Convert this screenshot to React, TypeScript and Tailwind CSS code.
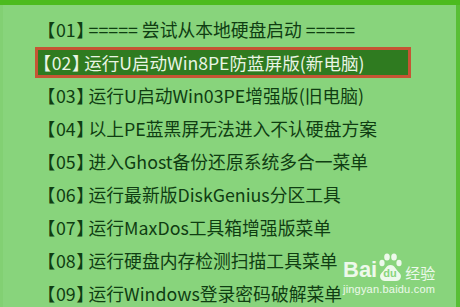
import React from "react";

type Item = {
  id: string;
  label: string;
};

const items: Item[] = [
  { id: "01", label: "===== 尝试从本地硬盘启动 =====" },
  { id: "02", label: "运行U启动Win8PE防蓝屏版(新电脑)" },
  { id: "03", label: "运行U启动Win03PE增强版(旧电脑)" },
  { id: "04", label: "以上PE蓝黑屏无法进入不认硬盘方案" },
  { id: "05", label: "进入Ghost备份还原系统多合一菜单" },
  { id: "06", label: "运行最新版DiskGenius分区工具" },
  { id: "07", label: "运行MaxDos工具箱增强版菜单" },
  { id: "08", label: "运行硬盘内存检测扫描工具菜单" },
  { id: "09", label: "运行Windows登录密码破解菜单" },
];

const selected = "02";

// brackets use proportional widths (palt) like the boot menu font
function Label({ item }: { item: Item }) {
  return (
    <>
      <span className="[font-feature-settings:'palt']">【</span>
      <span className="px-[1px]">{item.id}</span>
      <span className="[font-feature-settings:'palt'] pr-[3px]">】</span>
      <span>{item.label}</span>
    </>
  );
}

function BaiduMark() {
  return (
    <div className="absolute left-[343px] top-[252px] flex flex-col text-white/85 font-['Liberation_Sans',sans-serif]">
      <div className="flex items-end h-[30px]">
        <span className="text-[22px] font-bold leading-none mb-[1px]">Bai</span>
        <div className="relative w-[27px] h-[30px]">
          <svg width="27" height="30" viewBox="0 0 27 30" className="absolute left-0 top-0">
            <g fill="currentColor">
              <ellipse cx="5" cy="11" rx="2.6" ry="3.2" />
              <ellipse cx="10" cy="5" rx="2.8" ry="3.5" />
              <ellipse cx="17" cy="5" rx="2.8" ry="3.5" />
              <ellipse cx="22" cy="11" rx="2.6" ry="3.2" />
              <path d="M13.5 13 C9 13 8 18 4.5 21 C1.5 24 3.5 29 8 29 L19 29 C23.5 29 25.5 24 22.5 21 C19 18 18 13 13.5 13 Z" />
            </g>
          </svg>
          <span className="absolute left-[6px] top-[16px] text-[11px] font-bold leading-none text-[#88d47c]">du</span>
        </div>
        <span className="text-[15px] leading-none mb-[2px] ml-[1px] font-['Noto_Sans_CJK_SC',sans-serif]">经验</span>
      </div>
      <span className="text-[11px] leading-none mt-[2px] tracking-[0.2px]">jingyan.baidu.com</span>
    </div>
  );
}

export default function App() {
  return (
    <div className="relative w-[460px] h-[307px] overflow-hidden bg-[#88d47c] flex flex-col font-['Noto_Sans_CJK_SC','Noto_Sans',sans-serif]">
      <div className="h-[5px] bg-[#4cbb1e] shrink-0" />
      <div className="flex flex-1">
        <div className="w-[3px] bg-[#82d073]" />
        <div className="flex-1 pt-[8px]">
          {items.map((item) =>
            item.id === selected ? (
              <div key={item.id} className="h-[33px] flex items-center">
                <div className="ml-[32px] w-[376px] h-[31px] border-[3px] border-[#c65534] bg-[#2f7b20] flex items-center pl-[4px] text-[17.6px] text-[#e9f5e4] leading-none whitespace-nowrap">
                  <Label item={item} />
                </div>
              </div>
            ) : (
              <div
                key={item.id}
                className="h-[33px] flex items-center pl-[43px] text-[17.8px] text-[#0f3d12] leading-none whitespace-nowrap"
              >
                <Label item={item} />
              </div>
            )
          )}
        </div>
        <div className="w-[4px] bg-[#58bf35]" />
      </div>
      <BaiduMark />
    </div>
  );
}
